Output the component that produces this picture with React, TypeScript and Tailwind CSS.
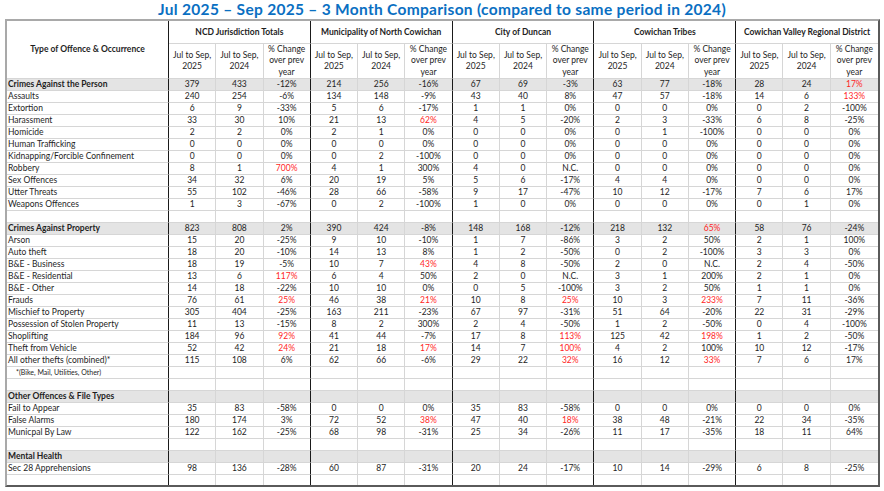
import React from "react";

type Row = { label: string; kind: "section" | "data" | "blank" | "note"; vals?: string; last?: boolean };

const rows: Row[] = [
  { label: "Crimes Against the Person", kind: "section", vals: "379 433 -12% 214 256 -16% 67 69 -3% 63 77 -18% 28 24 17%!" },
  { label: "Assaults", kind: "data", vals: "240 254 -6% 134 148 -9% 43 40 8% 47 57 -18% 14 6 133%!" },
  { label: "Extortion", kind: "data", vals: "6 9 -33% 5 6 -17% 1 1 0% 0 0 0% 0 2 -100%" },
  { label: "Harassment", kind: "data", vals: "33 30 10% 21 13 62%! 4 5 -20% 2 3 -33% 6 8 -25%" },
  { label: "Homicide", kind: "data", vals: "2 2 0% 2 1 0% 0 0 0% 0 1 -100% 0 0 0%" },
  { label: "Human Trafficking", kind: "data", vals: "0 0 0% 0 0 0% 0 0 0% 0 0 0% 0 0 0%" },
  { label: "Kidnapping/Forcible Confinement", kind: "data", vals: "0 0 0% 0 2 -100% 0 0 0% 0 0 0% 0 0 0%" },
  { label: "Robbery", kind: "data", vals: "8 1 700%! 4 1 300% 4 0 N.C. 0 0 0% 0 0 0%" },
  { label: "Sex Offences", kind: "data", vals: "34 32 6% 20 19 5% 5 6 -17% 4 4 0% 0 0 0%" },
  { label: "Utter Threats", kind: "data", vals: "55 102 -46% 28 66 -58% 9 17 -47% 10 12 -17% 7 6 17%" },
  { label: "Weapons Offences", kind: "data", vals: "1 3 -67% 0 2 -100% 1 0 0% 0 0 0% 0 1 0%" },
  { label: "", kind: "blank" },
  { label: "Crimes Against Property", kind: "section", vals: "823 808 2% 390 424 -8% 148 168 -12% 218 132 65%! 58 76 -24%" },
  { label: "Arson", kind: "data", vals: "15 20 -25% 9 10 -10% 1 7 -86% 3 2 50% 2 1 100%" },
  { label: "Auto theft", kind: "data", vals: "18 20 -10% 14 13 8% 1 2 -50% 0 2 -100% 3 3 0%" },
  { label: "B&E - Business", kind: "data", vals: "18 19 -5% 10 7 43%! 4 8 -50% 2 0 N.C. 2 4 -50%" },
  { label: "B&E - Residential", kind: "data", vals: "13 6 117%! 6 4 50% 2 0 N.C. 3 1 200% 2 1 0%" },
  { label: "B&E - Other", kind: "data", vals: "14 18 -22% 10 10 0% 0 5 -100% 3 2 50% 1 1 0%" },
  { label: "Frauds", kind: "data", vals: "76 61 25%! 46 38 21%! 10 8 25%! 10 3 233%! 7 11 -36%" },
  { label: "Mischief to Property", kind: "data", vals: "305 404 -25% 163 211 -23% 67 97 -31% 51 64 -20% 22 31 -29%" },
  { label: "Possession of Stolen Property", kind: "data", vals: "11 13 -15% 8 2 300% 2 4 -50% 1 2 -50% 0 4 -100%" },
  { label: "Shoplifting", kind: "data", vals: "184 96 92%! 41 44 -7% 17 8 113%! 125 42 198%! 1 2 -50%" },
  { label: "Theft from Vehicle", kind: "data", vals: "52 42 24%! 21 18 17%! 14 7 100%! 4 2 100% 10 12 -17%" },
  { label: "All other thefts (combined)*", kind: "data", vals: "115 108 6% 62 66 -6% 29 22 32%! 16 12 33%! 7 6 17%" },
  { label: "*(Bike, Mail, Utilities, Other)", kind: "note" },
  { label: "", kind: "blank" },
  { label: "Other Offences & File Types", kind: "section" },
  { label: "Fail to Appear", kind: "data", vals: "35 83 -58% 0 0 0% 35 83 -58% 0 0 0% 0 0 0%" },
  { label: "False Alarms", kind: "data", vals: "180 174 3% 72 52 38%! 47 40 18%! 38 48 -21% 22 34 -35%" },
  { label: "Municpal By Law", kind: "data", vals: "122 162 -25% 68 98 -31% 25 34 -26% 11 17 -35% 18 11 64%" },
  { label: "", kind: "blank" },
  { label: "Mental Health", kind: "section" },
  { label: "Sec 28 Apprehensions", kind: "data", vals: "98 136 -28% 60 87 -31% 20 24 -17% 10 14 -29% 6 8 -25%" },
  { label: "", kind: "blank", last: true },
];

const groups = [
  "NCD Jurisdiction Totals",
  "Municipality of North Cowichan",
  "City of Duncan",
  "Cowichan Tribes",
  "Cowichan Valley Regional District",
];

function rightBorder(j: number) {
  if (j === 14) return "";
  if (j % 3 === 2) return "border-r border-r-[#1a1a1a]";
  return "border-r border-r-[#d6d6d6]";
}

export default function App() {
  return (
    <div className="w-[884px] h-[491px] bg-white overflow-hidden font-['Lato',sans-serif] text-[#1e1e1e]">
      <div className="h-[19px] flex items-center justify-center">
        <h1 className="text-[15.5px] font-bold text-[#0a6fc2] tracking-[0.3px] leading-none">
          Jul 2025 – Sep 2025 – 3 Month Comparison (compared to same period in 2024)
        </h1>
      </div>
      <div className="ml-[5px] w-[875px] border-t-2 border-l-2 border-t-[#a9a9a9] border-l-[#a9a9a9] border-r-2 border-b-2 border-r-[#5a5a5a] border-b-[#5a5a5a]">
        <div className="grid grid-cols-[162px_repeat(15,minmax(0,1fr))]">
          {/* header */}
          <div className="row-span-2 h-[58px] flex items-center justify-center border-r border-r-[#1a1a1a] border-b border-b-[#d6d6d6] text-[8.5px] font-bold">
            Type of Offence &amp; Occurrence
          </div>
          {groups.map((g, i) => (
            <div
              key={g}
              className={`col-span-3 h-[23px] flex items-center justify-center border-b border-b-[#d6d6d6] text-[8.5px] font-bold whitespace-nowrap ${i < 4 ? "border-r border-r-[#1a1a1a]" : ""}`}
            >
              {g}
            </div>
          ))}
          {Array.from({ length: 15 }).map((_, j) => (
            <div
              key={j}
              className={`h-[35px] flex items-center justify-center text-center border-b border-b-[#d6d6d6] text-[8.5px] leading-[11.5px] ${rightBorder(j)}`}
            >
              {j % 3 === 2 ? (
                <span>
                  % Change
                  <br />
                  over prev
                  <br />
                  year
                </span>
              ) : (
                <span>
                  Jul to Sep,
                  <br />
                  {j % 3 === 0 ? "2025" : "2024"}
                </span>
              )}
            </div>
          ))}
          {/* body */}
          {rows.map((r, i) => {
            const vals = r.vals ? r.vals.split(" ") : Array(15).fill("");
            const gray = r.kind === "section";
            const h = r.last ? "h-[10px] border-b-0" : "h-[12px] border-b";
            return (
              <React.Fragment key={i}>
                <div
                  className={`${h} border-b-[#d6d6d6] border-r border-r-[#1a1a1a] flex items-center whitespace-nowrap overflow-hidden leading-none ${gray ? "bg-[#e4e4e4] font-bold text-[8.5px] pl-[1px]" : r.kind === "note" ? "text-[7px] pl-[9px]" : "text-[8.5px] pl-[1px]"}`}
                >
                  {r.label}
                </div>
                {vals.map((v: string, j: number) => {
                  const red = v.endsWith("!");
                  const t = red ? v.slice(0, -1) : v;
                  return (
                    <div
                      key={j}
                      className={`${h} border-b-[#d6d6d6] ${rightBorder(j)} flex items-center justify-center text-[8.5px] leading-none ${gray ? "bg-[#e4e4e4]" : ""} ${red ? "text-[#ff1f1f]" : ""}`}
                    >
                      {t}
                    </div>
                  );
                })}
              </React.Fragment>
            );
          })}
        </div>
      </div>
    </div>
  );
}
